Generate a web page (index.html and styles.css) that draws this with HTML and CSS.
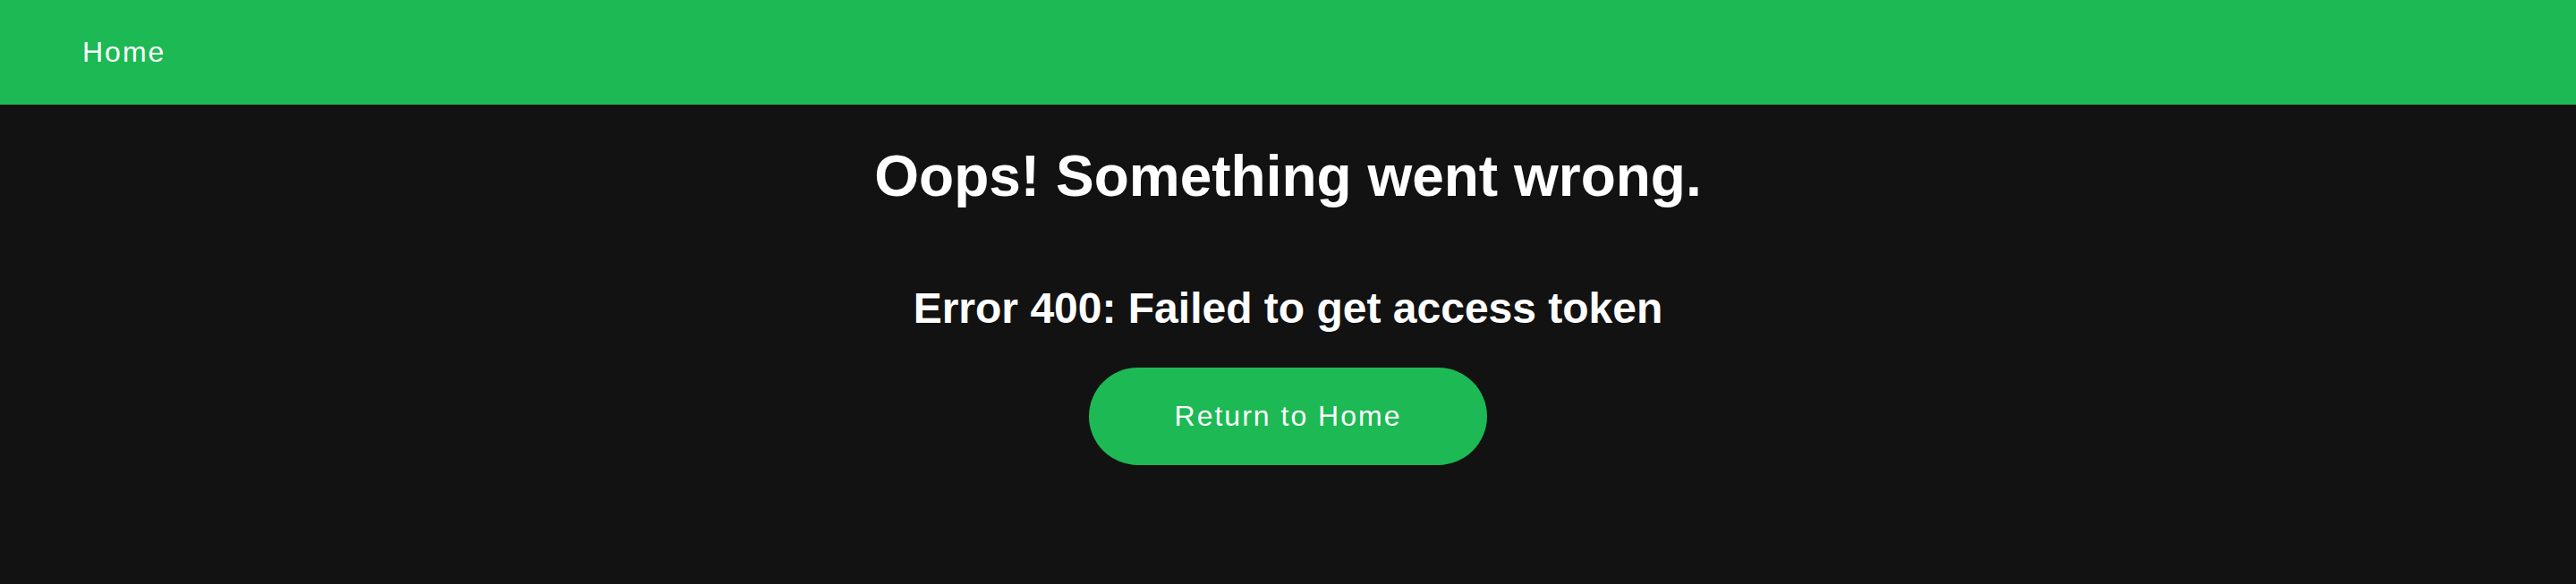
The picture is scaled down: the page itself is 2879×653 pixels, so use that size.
FILE: index.html
```html
<!DOCTYPE html>
<html lang="en">
<head>
<meta charset="utf-8">
<title>Error</title>
<link rel="stylesheet" href="styles.css">
</head>
<body>
<nav class="navbar">
  <a class="nav-link" href="#">Home</a>
</nav>
<main class="error-page">
  <div class="title-block">
    <h1 class="title">Oops! Something went wrong.</h1>
  </div>
  <div class="message-block">
    <h2 class="message">Error 400: Failed to get access token</h2>
  </div>
  <a class="home-button" href="#">Return to Home</a>
</main>
</body>
</html>
```

FILE: styles.css
```css
html, body {
  margin: 0;
  padding: 0;
  background: #121212;
  color: #ffffff;
  font-family: "Liberation Sans", Arial, sans-serif;
}

.navbar {
  background: #1db954;
  padding: 40px 92px;
  display: flex;
  align-items: center;
}

.nav-link {
  color: #ffffff;
  text-decoration: none;
  font-size: 32px;
  letter-spacing: 2px;
}

.error-page {
  display: flex;
  flex-direction: column;
  align-items: center;
  text-align: center;
}

.title {
  font-size: 64px;
  font-weight: bold;
  margin: 42.9px 0;
}

.message {
  font-size: 48px;
  font-weight: bold;
  margin: 39.8px 0;
}

.home-button {
  display: inline-block;
  background: #1db954;
  color: #ffffff;
  text-decoration: none;
  font-size: 32px;
  letter-spacing: 2px;
  padding: 35.6px 96px;
  border-radius: 60px;
}
```
